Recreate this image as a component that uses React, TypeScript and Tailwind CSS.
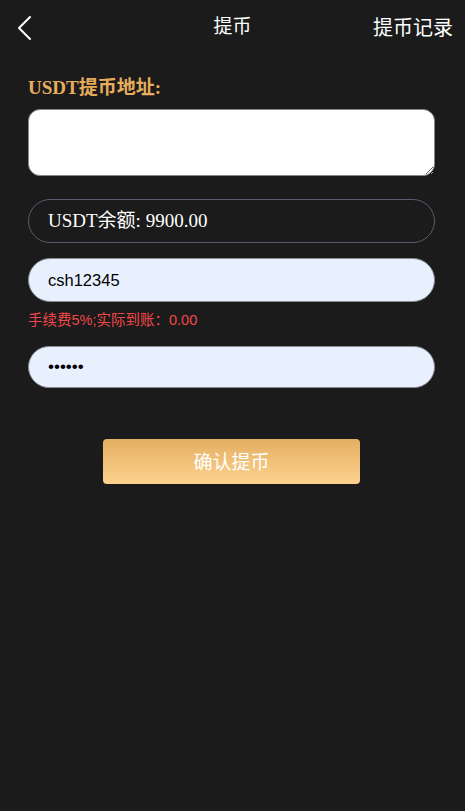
import { useState } from 'react';

const sans = "font-['Liberation_Sans','Noto_Sans_CJK_SC',sans-serif]";
const serif = "font-['Liberation_Serif','Noto_Sans_CJK_SC',serif]";

const App = () => {
  const [account, setAccount] = useState('csh12345');
  const [pwd, setPwd] = useState('123456');

  return (
    <div className={`min-h-[811px] w-full bg-[#1b1b1b] ${sans}`}>
      {/* Header */}
      <div className="relative flex h-[54px] items-center justify-center">
        <button className="absolute left-[14px] top-[13px] p-[2px]" aria-label="back">
          <svg width="16" height="26" viewBox="0 0 16 26" fill="none">
            <path d="M14 2 L3 13 L14 24" stroke="#fff" strokeWidth="2" strokeLinecap="round" strokeLinejoin="round" />
          </svg>
        </button>
        <span className="text-[19px] text-white">提币</span>
        <span className="absolute right-[12px] top-[13px] text-[20px] text-white">提币记录</span>
      </div>

      <div className="pl-[28px] pr-[30px] pt-[21px]">
        <p className={`${serif} text-[19px] font-bold leading-[26px] text-[#e6ad5c]`}>USDT提币地址:</p>

        <textarea className="mt-[8px] block h-[67px] w-full rounded-[12px] border border-[#888] bg-white px-3 py-2 text-[16px] text-black outline-none" />

        <div className={`mt-[23px] flex h-[44px] items-center rounded-full border border-[#5c5a70] px-[19px] text-[19px] text-white ${serif}`}>
          USDT余额: 9900.00
        </div>

        <input
          value={account}
          onChange={(e) => setAccount(e.target.value)}
          className="mt-[15px] block h-[44px] w-full rounded-full border border-[#8a8a95] bg-[#e8f0fe] px-[19px] text-[16.5px] text-black outline-none"
        />
        <p className="mt-[8px] text-[14.5px] leading-[20px] text-[#f2474a]">手续费5%;实际到账：0.00</p>

        <input
          type="password"
          value={pwd}
          onChange={(e) => setPwd(e.target.value)}
          className="mt-[16px] block h-[42px] w-full rounded-full border border-[#8a8a95] bg-[#e8f0fe] px-[19px] text-[17px] text-black outline-none"
        />

        <div className="mt-[51px] flex justify-center">
          <button className="h-[45px] w-[257px] rounded-[4px] bg-gradient-to-b from-[#e3af62] to-[#fed28e] pt-[3px] text-[19px] text-white">
            确认提币
          </button>
        </div>
      </div>
    </div>
  );
};

export default App;
